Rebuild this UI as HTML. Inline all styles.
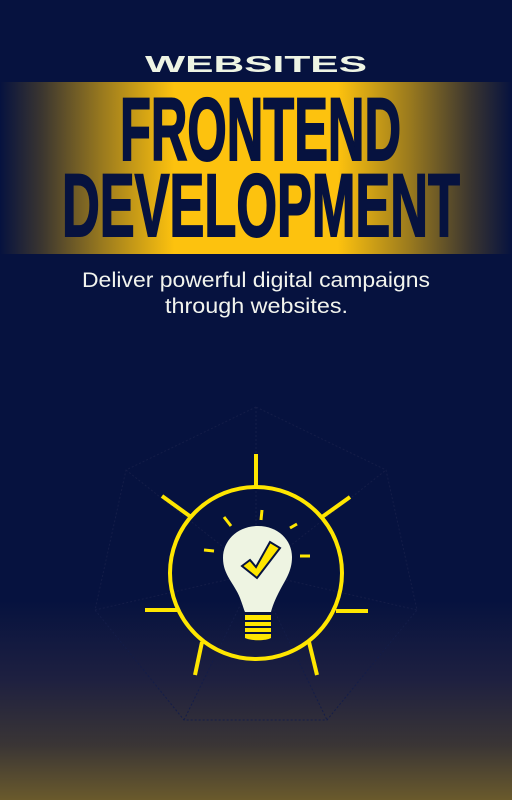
<!DOCTYPE html>
<html><head><style>
html,body{margin:0;padding:0}
body{width:512px;height:800px;overflow:hidden;background:linear-gradient(to bottom,#06123f 0,#06123f 600px,#1e2040 680px,#3a3535 745px,#6a5a2c 800px);position:relative;font-family:"Liberation Sans",sans-serif}
.band{position:absolute;left:0;top:82px;width:512px;height:172px;background:linear-gradient(to right,#06123f 0%,#3a3530 8%,#9a7a1e 20%,#fdc20e 34%,#fdc20e 66%,#9a7a1e 80%,#3a3530 92%,#06123f 100%)}
svg{position:absolute;left:0;top:0}
</style></head><body>
<div class="band"></div>
<svg width="512" height="800" viewBox="0 0 512 800">
<text x="145" y="72" textLength="222" lengthAdjust="spacingAndGlyphs" font-family="Liberation Sans" font-weight="bold" font-size="23" fill="#eef4e4">WEBSITES</text>
<text x="120" y="160" textLength="281" lengthAdjust="spacingAndGlyphs" font-family="Liberation Sans Narrow, Liberation Sans" font-weight="bold" font-size="89" fill="#06123f" stroke="#06123f" stroke-width="2">FRONTEND</text>
<text x="62" y="236" textLength="398" lengthAdjust="spacingAndGlyphs" font-family="Liberation Sans Narrow, Liberation Sans" font-weight="bold" font-size="89" fill="#06123f" stroke="#06123f" stroke-width="2">DEVELOPMENT</text>
<text x="82" y="287" textLength="348" lengthAdjust="spacingAndGlyphs" font-family="Liberation Sans" font-size="21" fill="#f2f4ee">Deliver powerful digital campaigns</text>
<text x="165" y="313" textLength="183" lengthAdjust="spacingAndGlyphs" font-family="Liberation Sans" font-size="21" fill="#f2f4ee">through websites.</text>
<g stroke="#141d48" stroke-width="1" stroke-dasharray="2 2" fill="none">
<path d="M256 407 L126 470 L95 610 L184 720 L327 720 L417 610 L386 470 Z M256 407 L256 573 M126 470 L256 573 L386 470 M95 610 L256 573 L417 610 M184 720 L256 573 L327 720"/>
</g>
<g stroke="#ffe600" stroke-width="4" fill="none">
<circle cx="256" cy="573" r="86"/>
<line x1="256" y1="454" x2="256" y2="488"/>
<line x1="162" y1="496" x2="191" y2="517"/>
<line x1="350" y1="497" x2="322" y2="517"/>
<line x1="145" y1="610" x2="177" y2="610"/>
<line x1="368" y1="611" x2="336" y2="611"/>
<line x1="195" y1="675" x2="202" y2="642"/>
<line x1="317" y1="675" x2="309" y2="642"/>
</g>
<g stroke="#ffe600" stroke-width="3" fill="none">
<line x1="224" y1="517" x2="231" y2="526"/>
<line x1="262" y1="510" x2="261" y2="520"/>
<line x1="290" y1="528" x2="297" y2="524"/>
<line x1="204" y1="550" x2="214" y2="551"/>
<line x1="300" y1="556" x2="310" y2="556"/>
</g>
<path d="M258 526 C238 526 223 540 223 558 C223 575 234 583 240 598 C243 606 244 610 245 612 L271 612 C272 608 274 602 278 594 C285 580 292 572 292 557 C292 540 278 526 258 526 Z" fill="#eef4e2"/>
<path d="M245 615 L271 615 L271 638 C266 641 251 641 245 638 Z" fill="#ffe600"/>
<g stroke="#06123f" stroke-width="2"><line x1="244" y1="621" x2="272" y2="621"/><line x1="244" y1="627" x2="272" y2="627"/><line x1="244" y1="633" x2="272" y2="633"/></g>
<path d="M242 566 L250 560 L256 567 L270 542 L280 548 L257 578 Z" fill="#ffe600" stroke="#06123f" stroke-width="2"/>
</svg>
</body></html>
